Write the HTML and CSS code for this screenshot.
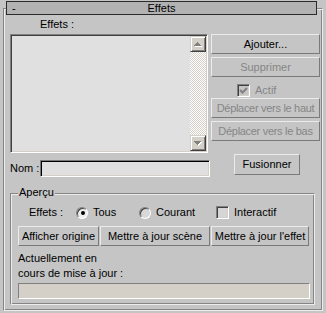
FILE: index.html
```html
<!DOCTYPE html>
<html lang="fr">
<head>
<meta charset="UTF-8" />
<title>Effets</title>
<link rel="stylesheet" href="styles.css">
</head>
<body>

<div class="rollout">
  <div class="rollout-title">
    <span class="collapse">-</span>
    <span class="title-text">Effets</span>
  </div>

  <div class="effects-label">Effets :</div>

  <div class="main-row">
    <div class="listbox">
      <div class="list-items"></div>
      <div class="scrollbar">
        <div class="scroll-btn">
          <svg width="12" height="12" viewBox="2 2 12 12" shape-rendering="crispEdges">
            <path fill="#fff" d="M8 7h1v1h-1z M7 8h3v1h-3z M6 9h5v1h-5z M5 10h7v1h-7z" />
            <path fill="#808080" d="M7 6h1v1h-1z M6 7h3v1h-3z M5 8h5v1h-5z M4 9h7v1h-7z" />
          </svg>
        </div>
        <div class="scroll-track"></div>
        <div class="scroll-btn">
          <svg width="12" height="12" viewBox="2 2 12 12" shape-rendering="crispEdges">
            <path fill="#fff" d="M5 7h7v1h-7z M6 8h5v1h-5z M7 9h3v1h-3z M8 10h1v1h-1z" />
            <path fill="#808080" d="M4 6h7v1h-7z M5 7h5v1h-5z M6 8h3v1h-3z M7 9h1v1h-1z" />
          </svg>
        </div>
      </div>
    </div>

    <div class="side-buttons">
      <button class="btn">Ajouter...</button>
      <button class="btn disabled">Supprimer</button>
      <div class="check-row disabled">
        <span class="checkbox">
          <svg width="11" height="11" viewBox="0 0 11 11">
            <polyline points="2,5 4.5,7.5 9,3" fill="none" stroke="#808080" stroke-width="2" />
          </svg>
        </span>
        Actif
      </div>
      <button class="btn disabled move-up">Déplacer vers le haut</button>
      <button class="btn disabled move-down">Déplacer vers le bas</button>
    </div>
  </div>

  <div class="name-row">
    <div class="name-field">
      <span class="name-label">Nom :</span>
      <div class="textbox"></div>
    </div>
    <button class="btn btn-merge">Fusionner</button>
  </div>

  <div class="group">
    <span class="legend">Aperçu</span>

    <div class="option-row">
      <span class="option-label">Effets :</span>
      <span class="radio-item item-all"><span class="radio checked"></span>Tous</span>
      <span class="radio-item item-current"><span class="radio off"></span>Courant</span>
      <span class="radio-item"><span class="checkbox light"></span>Interactif</span>
    </div>

    <div class="preview-buttons">
      <button class="btn btn-origin">Afficher origine</button>
      <button class="btn btn-scene">Mettre à jour scène</button>
      <button class="btn btn-effect">Mettre à jour l'effet</button>
    </div>

    <div class="status-text">Actuellement en<br>cours de mise à jour :</div>
    <div class="progress"></div>
  </div>
</div>

</body>
</html>
```

FILE: styles.css
```css
body {
  margin: 0;
  background-color: #c5c5c5;
  color: #000;
  font-family: 'Liberation Sans', Arial, sans-serif;
  font-size: 11px;
  line-height: 13px;
}

/* cadre du rollout */
.rollout {
  box-sizing: border-box;
  width: 320px;
  height: 303px;
  margin: 8px 0 0 3px;
  border: 1px solid;
  border-color: #858585 #ececec #ececec #858585;
  box-shadow: inset 1px 1px 0 #ececec, inset -1px -1px 0 #858585;
}
.rollout-title {
  box-sizing: border-box;
  height: 14px;
  margin: -8px 5px 0 2px;
  border: 1px solid #2b2b2b;
  background-color: #b2b2b2;
  display: grid;
  grid-template-columns: 1fr auto 1fr;
  line-height: 12px;
}
.collapse {
  padding-left: 5px;
}
.effects-label {
  margin: 3px 0 0 36px;
}

/* liste + boutons */
.main-row {
  display: flex;
  margin-top: 3px;
  padding-left: 6px;
}
.listbox {
  box-sizing: border-box;
  width: 198px;
  height: 119px;
  display: flex;
  border: 1px solid;
  border-color: #808080 #fff #fff #808080;
  box-shadow: inset 1px 1px 0 #404040, inset -1px -1px 0 #d4d0c8;
  padding: 1px;
  background-color: #e0e0e0;
}
.list-items {
  flex: 1;
}
.scrollbar {
  width: 16px;
  display: flex;
  flex-direction: column;
}
.scroll-btn {
  box-sizing: border-box;
  width: 16px;
  height: 16px;
  display: flex;
  align-items: center;
  justify-content: center;
  background-color: #d4d0c8;
  border: 1px solid;
  border-color: #d4d0c8 #404040 #404040 #d4d0c8;
  box-shadow: inset 1px 1px 0 #fff, inset -1px -1px 0 #808080;
}
.scroll-track {
  flex: 1;
  background: repeating-conic-gradient(#fff 0 25%, #d4d0c8 0 50%) 0 0 / 2px 2px;
}

.side-buttons {
  width: 109px;
  margin-left: 3px;
  display: flex;
  flex-direction: column;
}
.btn {
  box-sizing: border-box;
  height: 20px;
  padding: 0;
  font: inherit;
  line-height: 13px;
  color: #000;
  background-color: #c5c5c5;
  border: 1px solid;
  border-color: #ebebeb #7a7a7a #7a7a7a #ebebeb;
  white-space: nowrap;
}
.side-buttons .btn + .btn {
  margin-top: 3px;
}
.disabled {
  color: #868686;
}
.check-row {
  display: flex;
  align-items: center;
  height: 13px;
  margin: 7px 0 0 26px;
}
.side-buttons .move-up {
  margin-top: 1px;
}
.side-buttons .move-down {
  margin-top: 4px;
}
.move-up,
.move-down {
  letter-spacing: -0.3px;
}
.checkbox {
  box-sizing: border-box;
  width: 13px;
  height: 13px;
  margin-right: 5px;
  border: 1px solid;
  border-color: #808080 #fff #fff #808080;
  box-shadow: inset 1px 1px 0 #404040, inset -1px -1px 0 #d4d0c8;
  background-color: #c5c5c5;
  display: flex;
}
.checkbox.light {
  background-color: #d6d6d6;
}

/* nom */
.name-row {
  display: flex;
  margin-top: 1px;
  padding-left: 6px;
}
.name-field {
  display: flex;
  margin-top: 6px;
}
.name-label {
  width: 30px;
  line-height: 17px;
}
.textbox {
  box-sizing: border-box;
  width: 170px;
  height: 17px;
  border: 1px solid;
  border-color: #7a7a7a #fff #fff #7a7a7a;
  box-shadow: inset 1px 1px 0 #000, inset -1px -1px 0 #d4d0c8;
  background-color: #e0e0e0;
}
.btn-merge {
  width: 66px;
  height: 21px;
  margin-left: 24px;
}

/* groupe aperçu */
.group {
  box-sizing: border-box;
  width: 305px;
  margin: 16px 0 0 6px;
  padding-bottom: 5px;
  border: 1px solid;
  border-color: #858585 #ececec #ececec #858585;
  box-shadow: inset 1px 1px 0 #ececec, inset -1px -1px 0 #858585;
}
.legend {
  display: block;
  width: max-content;
  margin: -9px 0 0 7px;
  padding: 0 1px;
  line-height: 14px;
  background-color: #c5c5c5;
}
.option-row {
  display: flex;
  align-items: center;
  height: 13px;
  margin: 7px 0 0 18px;
}
.option-label {
  width: 47px;
}
.radio-item {
  display: flex;
  align-items: center;
}
.item-all {
  width: 63px;
}
.item-current {
  width: 77px;
}
.radio {
  box-sizing: border-box;
  width: 12px;
  height: 12px;
  margin-right: 5px;
  border-radius: 50%;
  border: 1px solid;
  border-color: #808080 #fff #fff #808080;
  box-shadow: inset 1px 1px 0 #404040;
  display: flex;
  align-items: center;
  justify-content: center;
}
.radio.checked {
  background-color: #eeeeee;
}
.radio.checked::after {
  content: "";
  width: 4px;
  height: 4px;
  margin: 1px 0 0 1px;
  border-radius: 50%;
  background-color: #000;
}
.radio.off {
  background-color: #d8d8d8;
}

.preview-buttons {
  display: flex;
  gap: 1px;
  margin: 7px 0 0 7px;
}
.btn-origin {
  width: 81px;
}
.btn-scene {
  width: 110px;
}
.btn-effect {
  width: 98px;
}
.status-text {
  margin: 5px 0 0 7px;
  line-height: 15px;
}
.progress {
  box-sizing: border-box;
  width: 292px;
  height: 16px;
  margin: 2px 0 0 7px;
  border: 1px solid;
  border-color: #808080 #fff #fff #808080;
  background-color: #d4d0c8;
}
```
